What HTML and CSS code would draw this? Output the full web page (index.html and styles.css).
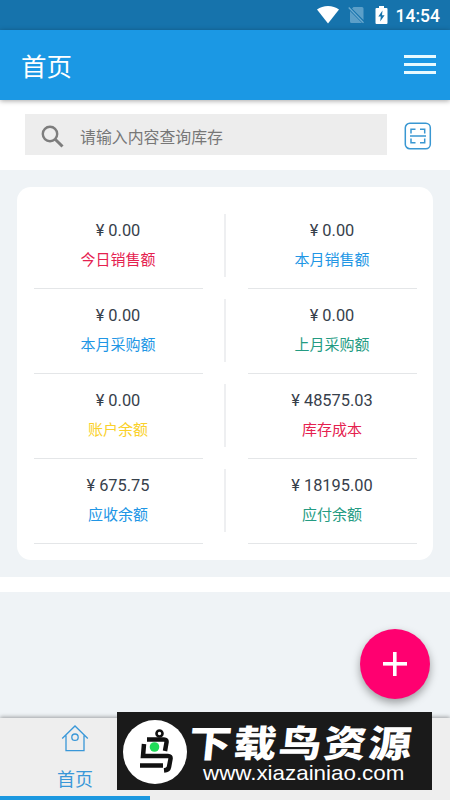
FILE: index.html
```html
<!DOCTYPE html>
<html lang="zh-CN">
<head>
<meta charset="utf-8">
<title>首页</title>
<link rel="stylesheet" href="styles.css">
</head>
<body>
<div class="screen">
  <div class="status">
    <svg class="wifi" width="22" height="18" viewBox="0 0 22 18"><path d="M0 3.600C6-1.100 16-1.100 22 3.600L11 17.500z" fill="#fff"/></svg>
    <svg class="sim" width="17" height="18" viewBox="0 0 17 18"><path d="M5.500 1H14q1.500 0 1.500 1.500V14L4 2.500zM2 5L14 17H3.500Q2 17 2 15.500z" fill="#5c9fc8"/><path d="M.7 1.500L15.500 16.800" stroke="#6dabd0" stroke-width="1.300"/></svg>
    <svg class="battery" width="13" height="18" viewBox="0 0 13 18"><path d="M4 0h5v2h2.500q1 0 1 1v14q0 1-1 1h-10q-1 0-1-1V3q0-1 1-1H4z" fill="#fff"/><path d="M7.500 4.500L3.300 10.500h2.500L5.200 15.500 9.600 9.200H7z" fill="#1673ac"/></svg>
    <span class="clock">14:54</span>
  </div>
  <header class="appbar">
    <h1>首页</h1>
    <div class="menu"><i></i><i></i><i></i></div>
  </header>
  <section class="search">
    <div class="search-box">
      <svg width="24" height="24" viewBox="0 0 24 24" fill="none" stroke="#7d7d7d"><circle cx="9" cy="9" r="7.200" stroke-width="2.400"/><path d="M14.200 14.200L21.500 21.500" stroke-width="3"/></svg>
      <span>请输入内容查询库存</span>
    </div>
    <svg class="scan" width="28" height="28" viewBox="0 0 28 28" fill="none" stroke="#3997d2" stroke-width="1.500"><rect x="1.300" y="1.300" width="25" height="25.400" rx="4.500"/><path d="M7 11.500V7.200h4.500M16 7.200h4.700v4.300M7 16.500v4.300h4.500M16 20.800h4.700v-4.300M6 14h16"/></svg>
  </section>
  <main class="content">
    <div class="card">
      <div class="cell"><b>¥ 0.00</b><span class="red">今日销售额</span></div>
      <div class="cell"><b>¥ 0.00</b><span class="blue">本月销售额</span></div>
      <div class="cell"><b>¥ 0.00</b><span class="blue">本月采购额</span></div>
      <div class="cell"><b>¥ 0.00</b><span class="green">上月采购额</span></div>
      <div class="cell"><b>¥ 0.00</b><span class="yellow">账户余额</span></div>
      <div class="cell"><b>¥ 48575.03</b><span class="red">库存成本</span></div>
      <div class="cell"><b>¥ 675.75</b><span class="blue">应收余额</span></div>
      <div class="cell"><b>¥ 18195.00</b><span class="green">应付余额</span></div>
    </div>
    <div class="band"></div>
  </main>
  <nav class="tabs">
    <div class="tab">
      <svg width="28" height="28" viewBox="0 0 28 28" fill="none" stroke="#3997d8" stroke-width="1.300"><path d="M1.200 14.500L14 2l12.800 12.500M5 11.500v15.200h18V11.500"/><circle cx="14" cy="13.200" r="3.200"/></svg>
      <span>首页</span>
    </div>
  </nav>
  <button class="fab" aria-label="新增"></button>
  <div class="watermark">
    <svg width="64" height="64" viewBox="0 0 64 64"><circle cx="32" cy="32" r="32" fill="#fff"/><g fill="none" stroke="#111" stroke-width="4.500"><circle cx="36.500" cy="13.500" r="3" stroke-width="2.600"/><path d="M24 19.500H41q3 0 2.500 3L42 31M21 24l-1 12H45q3 0 2.500 3L46 47q-.5 3-5 3.500M17 45.500H40"/></g><circle cx="31.500" cy="27" r="4.800" fill="#20dc58"/></svg>
    <div class="brand">
      <strong>下载鸟资源</strong>
      <span>www.xiazainiao.com</span>
    </div>
  </div>
</div>
</body>
</html>
```
FILE: styles.css
```css
* { box-sizing: border-box; }
body { margin: 0; font-family: Roboto, "Noto Sans CJK SC", sans-serif; }
.screen {
  position: relative;
  display: flex;
  flex-direction: column;
  width: 450px;
  height: 800px;
  overflow: hidden;
  background: #eff3f6;
}
.status {
  display: flex;
  align-items: center;
  justify-content: flex-end;
  height: 30px;
  padding-right: 10px;
  background: #1673ac;
  color: #fff;
}
.wifi { margin-right: 2px; }
.sim { margin-left: 7px; }
.battery { margin-left: 10px; }
.clock { margin-left: 8px; font-size: 17.500px; font-weight: 500; line-height: 30px; padding-top: 1px; }
.appbar {
  position: relative;
  display: flex;
  align-items: center;
  justify-content: space-between;
  height: 70px;
  padding: 0 14px 0 21px;
  background: #1b98e4;
  box-shadow: 0 1px 5px rgba(0, 0, 0, .35);
}
.appbar h1 { margin: 3px 0 0; color: #fff; font-size: 25.500px; font-weight: 400; line-height: 36px; }
.menu { display: grid; gap: 4.500px; width: 32px; margin-bottom: 1px; }
.menu i { height: 3.300px; background: #e8faff; }
.search {
  display: flex;
  align-items: flex-start;
  height: 70px;
  padding: 14px 18px 0 25px;
  background: #fff;
}
.search-box {
  display: flex;
  align-items: center;
  width: 363px;
  height: 41px;
  padding: 4px 0 0 16px;
  background: #ededed;
  color: #777;
  font-size: 15.900px;
}
.search-box span { margin-left: 15px; }
.scan { flex: none; margin: 8px 0 0 17px; }
.content { flex: 1; padding-top: 17px; }
.card {
  display: grid;
  grid-template-columns: 169px 169px;
  grid-auto-rows: 85px;
  column-gap: 45px;
  width: 416px;
  height: 373px;
  margin: 0 auto;
  padding: 17px 16px 0 17px;
  border-radius: 14px;
  background: #fff;
}
.cell {
  position: relative;
  display: flex;
  flex-direction: column;
  align-items: center;
  padding: 16px 1px 0 0;
  border-bottom: 1px solid #e4e6e8;
}
.cell:nth-child(odd)::after {
  content: "";
  position: absolute;
  top: 10px;
  right: -23px;
  width: 2px;
  height: 63px;
  background: #eeeff1;
}
.cell b { color: #37404b; font-size: 16.400px; font-weight: 400; line-height: 22px; }
.cell span { margin-top: 7px; font-size: 15px; line-height: 22px; }
.red { color: #e5214f; }
.blue { color: #2196e5; }
.green { color: #249b82; }
.yellow { color: #fad12b; }
.band { height: 15px; margin-top: 17px; background: #fff; }
.tabs {
  display: flex;
  height: 82px;
  background: #eee;
  box-shadow: 0 -1px 4px rgba(0, 0, 0, .35);
}
.tab {
  display: flex;
  flex-direction: column;
  align-items: center;
  width: 150px;
  padding-top: 6px;
  border-bottom: 4px solid #1b98e0;
  color: #3997d8;
  font-size: 18px;
}
.tab span { margin-top: 14px; line-height: 28px; }
.fab {
  position: absolute;
  left: 360px;
  top: 629px;
  width: 70px;
  height: 70px;
  padding: 0;
  border: 0;
  border-radius: 50%;
  background:
    linear-gradient(#fff, #fff) center / 24px 3.600px no-repeat,
    linear-gradient(#fff, #fff) center / 3.600px 24px no-repeat,
    #ff0070;
  box-shadow: 0 4px 8px rgba(0, 0, 0, .35);
}
.watermark {
  position: absolute;
  left: 117px;
  top: 712px;
  display: flex;
  width: 315px;
  height: 78px;
  padding: 8px 0 0 6px;
  background: #1a1a1a;
  color: #fff;
}
.watermark svg { flex: none; }
.brand { display: flex; flex-direction: column; margin-left: 2px; white-space: nowrap; }
.brand strong {
  margin-top: 3px;
  font-family: "Noto Sans CJK SC", sans-serif;
  font-size: 37px;
  font-weight: 900;
  line-height: 36px;
  letter-spacing: 2px;
  transform: scaleX(1.155) skewX(-5deg);
  transform-origin: left;
}
.brand span {
  margin: 2px 0 0 14px;
  font-family: "Liberation Sans", sans-serif;
  font-size: 21px;
  line-height: 24px;
  transform: scaleX(1.065);
  transform-origin: left;
}
```
